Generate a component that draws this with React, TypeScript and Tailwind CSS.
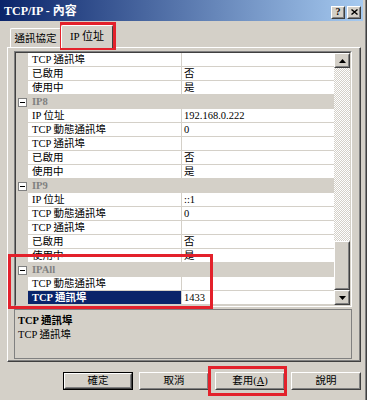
import React from "react";

type GridRow =
  | { kind: "head"; label: string }
  | { kind: "prop"; name: string; value: string; selected?: boolean };

const rows: GridRow[] = [
  { kind: "prop", name: "TCP 通訊埠", value: "" },
  { kind: "prop", name: "已啟用", value: "否" },
  { kind: "prop", name: "使用中", value: "是" },
  { kind: "head", label: "IP8" },
  { kind: "prop", name: "IP 位址", value: "192.168.0.222" },
  { kind: "prop", name: "TCP 動態通訊埠", value: "0" },
  { kind: "prop", name: "TCP 通訊埠", value: "" },
  { kind: "prop", name: "已啟用", value: "否" },
  { kind: "prop", name: "使用中", value: "是" },
  { kind: "head", label: "IP9" },
  { kind: "prop", name: "IP 位址", value: "::1" },
  { kind: "prop", name: "TCP 動態通訊埠", value: "0" },
  { kind: "prop", name: "TCP 通訊埠", value: "" },
  { kind: "prop", name: "已啟用", value: "否" },
  { kind: "prop", name: "使用中", value: "是" },
  { kind: "head", label: "IPAll" },
  { kind: "prop", name: "TCP 動態通訊埠", value: "" },
  { kind: "prop", name: "TCP 通訊埠", value: "1433", selected: true },
];

function Raised({
  children,
  className = "",
}: {
  children?: React.ReactNode;
  className?: string;
}) {
  return (
    <div
      className={`border border-t-white border-l-white border-r-[#404040] border-b-[#404040] bg-[#d4d0c8] ${className}`}
    >
      <div className="flex h-full w-full items-center justify-center border border-t-[#d4d0c8] border-l-[#d4d0c8] border-r-[#808080] border-b-[#808080]">
        {children}
      </div>
    </div>
  );
}

function Arrow({ down }: { down?: boolean }) {
  return (
    <svg width="7" height="4" viewBox="0 0 7 4">
      <path d={down ? "M0 0H7L3.5 4Z" : "M0 4H7L3.5 0Z"} fill="#000" />
    </svg>
  );
}

function MinusBox() {
  return (
    <div className="flex h-[9px] w-[9px] items-center justify-center border border-[#808080] bg-white">
      <div className="h-px w-[5px] bg-black" />
    </div>
  );
}

function GridLine({ row }: { row: GridRow }) {
  if (row.kind === "head") {
    return (
      <div className="flex h-[14px] items-center bg-[#d4d0c8]">
        <div className="flex w-[12px] justify-center pl-[1px]">
          <MinusBox />
        </div>
        <div className="pl-[4px] font-bold leading-[14px] text-[#808080]">
          {row.label}
        </div>
      </div>
    );
  }
  return (
    <div className="flex h-[14px]">
      <div className="w-[12px] bg-[#d4d0c8]" />
      <div
        className={`w-[154px] truncate border-r border-b border-[#d4d0c8] pl-[4px] leading-[13px] ${
          row.selected ? "bg-[#0a246a] font-bold text-white" : "bg-white text-black"
        }`}
      >
        {row.name}
      </div>
      <div className="flex-1 truncate border-b border-[#d4d0c8] bg-white pl-[2px] leading-[13px] text-black">
        {row.value}
      </div>
    </div>
  );
}

export default function App() {
  return (
    <div className="relative h-[400px] w-[367px] overflow-hidden border-r border-[#404040] bg-[#d4d0c8] font-['Liberation_Serif','Noto_Sans_CJK_TC',serif] text-[10.5px] text-black">
      <div className="h-full w-[366px] border-r border-[#808080]">
        {/* title bar */}
        <div className="flex h-[21px] w-[363px] items-center justify-between bg-[linear-gradient(to_right,#0a246a,#a6caf0)] pl-[4px] pr-[2px]">
          <span className="text-[12px] font-bold text-white">TCP/IP - 內容</span>
          <div className="mt-[3px] flex gap-[2px]">
            <Raised className="h-[13px] w-[14px]">
              <span className="text-[10px] font-bold leading-none">?</span>
            </Raised>
            <Raised className="h-[13px] w-[14px]">
              <svg width="7" height="6" viewBox="0 0 7 6">
                <path d="M0.5 0.5L6.5 5.5M6.5 0.5L0.5 5.5" stroke="#000" strokeWidth="1.4" />
              </svg>
            </Raised>
          </div>
        </div>

        <div className="pl-[7px] pr-[4px]">
          {/* tabs */}
          <div className="flex h-[26px] items-end pl-[3px]">
            <div className="flex h-[19px] w-[51px] items-center justify-center rounded-t-[2px] border-t border-l border-r border-t-white border-l-white border-r-[#404040] pt-[1px]">
              通訊協定
            </div>
            <div className="relative z-10 -mb-[1px] flex h-[23px] w-[52px] items-center justify-center rounded-t-[2px] border-t border-l border-r border-t-white border-l-white border-r-[#404040] bg-[#d4d0c8] pb-[2px] text-[11px]">
              IP 位址
            </div>
          </div>

          {/* tab panel */}
          <div className="h-[315px] border border-t-white border-l-white border-r-[#404040] border-b-[#404040]">
            <div className="h-full border-r border-b border-[#808080] pl-[6px] pt-[3px]">
              {/* property grid */}
              <div className="h-[256px] w-[338px] border border-t-[#808080] border-l-[#808080] border-r-white border-b-white">
                <div className="flex h-full border border-t-[#404040] border-l-[#404040] border-r-[#d4d0c8] border-b-[#d4d0c8]">
                  <div className="flex-1 overflow-hidden bg-white">
                    {rows.map((r, i) => (
                      <GridLine key={i} row={r} />
                    ))}
                  </div>
                  <div className="flex w-[16px] flex-col">
                    <Raised className="h-[15px] w-[16px]">
                      <Arrow />
                    </Raised>
                    <div className="flex-1 bg-[repeating-conic-gradient(#d4d0c8_0_25%,#ffffff_0_50%)] bg-[length:2px_2px]" />
                    <Raised className="h-[49px] w-[16px]" />
                    <Raised className="h-[15px] w-[16px]">
                      <Arrow down />
                    </Raised>
                  </div>
                </div>
              </div>

              {/* description */}
              <div className="mt-[2px] h-[50px] w-[338px] border border-[#808080] px-[3px] pt-[4px] leading-[14px]">
                <div className="font-bold">TCP 通訊埠</div>
                <div>TCP 通訊埠</div>
              </div>
            </div>
          </div>

          {/* buttons */}
          <div className="mt-[10px] flex justify-end gap-[6px]">
            <div className="border border-black">
              <Raised className="h-[16px] w-[68px]">確定</Raised>
            </div>
            <Raised className="h-[18px] w-[70px]">取消</Raised>
            <Raised className="h-[18px] w-[70px]">
              <span>
                套用(<span className="underline">A</span>)
              </span>
            </Raised>
            <Raised className="h-[18px] w-[70px]">說明</Raised>
          </div>
        </div>
      </div>

      {/* red annotation boxes */}
      <div className="absolute left-[60px] top-[22px] h-[28px] w-[56px] border-[3px] border-[#e3212b]" />
      <div className="absolute left-[8px] top-[254px] h-[55px] w-[205px] border-[3px] border-[#e3212b]" />
      <div className="absolute left-[208px] top-[366px] h-[30px] w-[79px] border-[3px] border-[#e3212b]" />
    </div>
  );
}
